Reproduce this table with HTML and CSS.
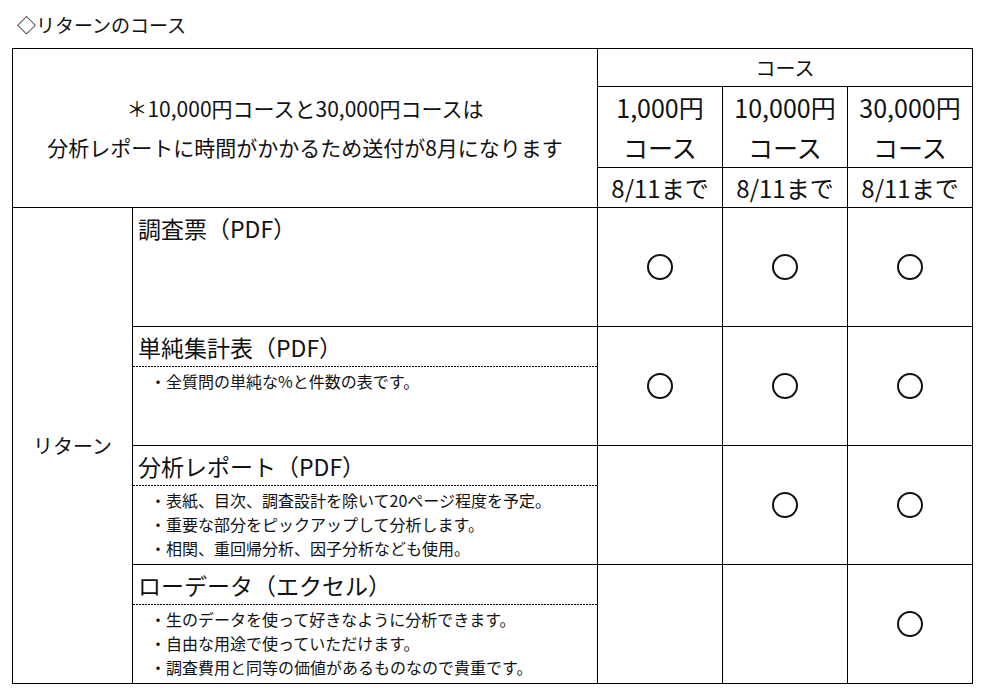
FILE: index.html
```html
<!DOCTYPE html>
<html lang="ja">
<head>
<meta charset="utf-8">
<title>リターンのコース</title>
<link rel="stylesheet" href="styles.css">
</head>
<body>
<div class="page">
  <h1 class="title">◇リターンのコース</h1>
  <table class="grid">
    <colgroup>
      <col class="c-label">
      <col class="c-item">
      <col class="c-course">
      <col class="c-course">
      <col class="c-course">
    </colgroup>
    <tr class="h-top">
      <td class="note" colspan="2" rowspan="3">＊10,000円コースと30,000円コースは<br>分析レポートに時間がかかるため送付が8月になります</td>
      <td class="course-head" colspan="3">コース</td>
    </tr>
    <tr class="h-mid">
      <td class="course-name">1,000円<br>コース</td>
      <td class="course-name">10,000円<br>コース</td>
      <td class="course-name">30,000円<br>コース</td>
    </tr>
    <tr class="h-bot">
      <td class="course-date">8/11まで</td>
      <td class="course-date">8/11まで</td>
      <td class="course-date">8/11まで</td>
    </tr>
    <tr class="row">
      <td class="label" rowspan="4">リターン</td>
      <td class="item">
        <div class="item-title">調査票（PDF）</div>
      </td>
      <td class="mark"><span class="circle"></span></td>
      <td class="mark"><span class="circle"></span></td>
      <td class="mark"><span class="circle"></span></td>
    </tr>
    <tr class="row">
      <td class="item">
        <div class="item-title dashed">単純集計表（PDF）</div>
        <ul class="bullets">
          <li>・全質問の単純な%と件数の表です。</li>
        </ul>
      </td>
      <td class="mark"><span class="circle"></span></td>
      <td class="mark"><span class="circle"></span></td>
      <td class="mark"><span class="circle"></span></td>
    </tr>
    <tr class="row">
      <td class="item">
        <div class="item-title dashed">分析レポート（PDF）</div>
        <ul class="bullets">
          <li>・表紙、目次、調査設計を除いて20ページ程度を予定。</li>
          <li>・重要な部分をピックアップして分析します。</li>
          <li>・相関、重回帰分析、因子分析なども使用。</li>
        </ul>
      </td>
      <td class="mark"></td>
      <td class="mark"><span class="circle"></span></td>
      <td class="mark"><span class="circle"></span></td>
    </tr>
    <tr class="row">
      <td class="item">
        <div class="item-title dashed">ローデータ（エクセル）</div>
        <ul class="bullets">
          <li>・生のデータを使って好きなように分析できます。</li>
          <li>・自由な用途で使っていただけます。</li>
          <li>・調査費用と同等の価値があるものなので貴重です。</li>
        </ul>
      </td>
      <td class="mark"></td>
      <td class="mark"></td>
      <td class="mark"><span class="circle"></span></td>
    </tr>
  </table>
</div>
</body>
</html>
```
FILE: styles.css
```css
html, body {
  margin: 0;
  padding: 0;
  background: #fff;
}
body {
  font-family: "Noto Sans CJK JP", "Noto Sans", sans-serif;
  color: #111;
}
.page {
  padding: 10px 0 0 12px;
}
.title {
  margin: 0 0 8px 0;
  padding-left: 5px;
  font-size: 19px;
  font-weight: normal;
  line-height: 30px;
  height: 30px;
}
.grid {
  border-collapse: collapse;
  table-layout: fixed;
  width: 961px;
}
.grid td {
  border: 1px solid #000;
  padding: 0;
}
.c-label { width: 120px; }
.c-item { width: 465px; }
.c-course { width: 125px; }

.h-top { height: 38px; }
.h-mid { height: 81px; }
.h-bot { height: 40px; }
.row { height: 119px; }

.note {
  text-align: center;
  vertical-align: middle;
  font-size: 21px;
  line-height: 39px;
}
.course-head {
  text-align: center;
  vertical-align: middle;
  font-size: 20px;
  line-height: 28px;
}
.course-name {
  text-align: center;
  vertical-align: middle;
  font-size: 25px;
  line-height: 40px;
}
.course-date {
  text-align: center;
  vertical-align: middle;
  font-size: 24px;
  line-height: 30px;
}
.label {
  text-align: center;
  vertical-align: middle;
  font-size: 20px;
}
.item {
  vertical-align: top;
}
.item-title {
  height: 40px;
  line-height: 41px;
  padding-left: 5px;
  font-size: 23px;
}
.item-title.dashed {
  background-image: linear-gradient(to right, #000 2px, transparent 2px);
  background-size: 3px 1px;
  background-repeat: repeat-x;
  background-position: left bottom;
}
.bullets {
  list-style: none;
  margin: 0;
  padding: 2px 0 0 17px;
  font-size: 16px;
  line-height: 24px;
}
.mark {
  text-align: center;
  vertical-align: middle;
}
.circle {
  display: block;
  margin: 0 auto;
  width: 22px;
  height: 22px;
  border: 2px solid #111;
  border-radius: 50%;
}
```
